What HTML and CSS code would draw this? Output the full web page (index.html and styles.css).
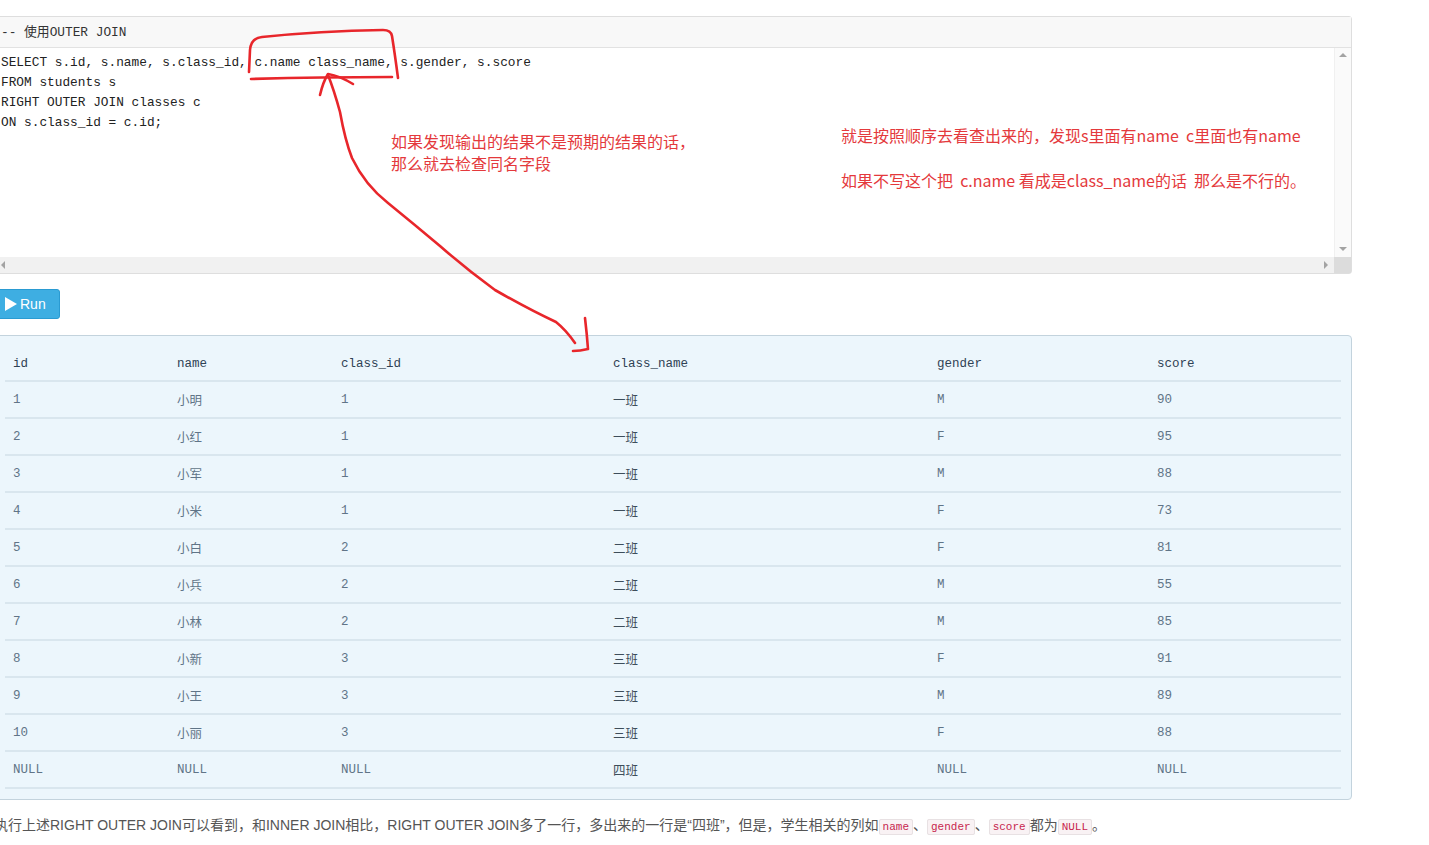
FILE: index.html
```html
<!DOCTYPE html>
<html lang="zh">
<head>
<meta charset="utf-8">
<title>RIGHT OUTER JOIN</title>
<link rel="stylesheet" href="styles.css">
</head>
<body>
<div class="wrap">
  <div class="editor">
    <div class="editor-head">-- 使用OUTER JOIN</div>
    <div class="editor-body">
      <div class="code-area">
<pre class="code">SELECT s.id, s.name, s.class_id, c.name class_name, s.gender, s.score
FROM students s
RIGHT OUTER JOIN classes c
ON s.class_id = c.id;</pre>
        <div class="note note-left">如果发现输出的结果不是预期的结果的话，<br>那么就去检查同名字段</div>
        <div class="note note-right">
          <p>就是按照顺序去看查出来的，发现s里面有name&nbsp; c里面也有name</p>
          <p>如果不写这个把&nbsp; c.name 看成是class_name的话&nbsp; 那么是不行的。</p>
        </div>
      </div>
      <div class="vscroll">
        <span class="arr arr-up"></span>
        <span class="arr arr-down"></span>
      </div>
    </div>
    <div class="hscroll-row">
      <div class="hscroll">
        <span class="arr arr-left"></span>
        <span class="arr arr-right"></span>
      </div>
      <div class="corner"></div>
    </div>
  </div>

  <button class="run-btn"><svg class="tri" width="12" height="14" viewBox="0 0 12 14" aria-hidden="true"><polygon points="0,0 12,7 0,14" fill="#ffffff"/></svg>Run</button>

  <div class="result">
    <table class="grid">
      <thead>
        <tr><th class="c1">id</th><th class="c2">name</th><th class="c3">class_id</th><th class="c4">class_name</th><th class="c5">gender</th><th class="c6">score</th></tr>
      </thead>
      <tbody>
        <tr><td>1</td><td>小明</td><td>1</td><td class="cn">一班</td><td>M</td><td>90</td></tr>
        <tr><td>2</td><td>小红</td><td>1</td><td class="cn">一班</td><td>F</td><td>95</td></tr>
        <tr><td>3</td><td>小军</td><td>1</td><td class="cn">一班</td><td>M</td><td>88</td></tr>
        <tr><td>4</td><td>小米</td><td>1</td><td class="cn">一班</td><td>F</td><td>73</td></tr>
        <tr><td>5</td><td>小白</td><td>2</td><td class="cn">二班</td><td>F</td><td>81</td></tr>
        <tr><td>6</td><td>小兵</td><td>2</td><td class="cn">二班</td><td>M</td><td>55</td></tr>
        <tr><td>7</td><td>小林</td><td>2</td><td class="cn">二班</td><td>M</td><td>85</td></tr>
        <tr><td>8</td><td>小新</td><td>3</td><td class="cn">三班</td><td>F</td><td>91</td></tr>
        <tr><td>9</td><td>小王</td><td>3</td><td class="cn">三班</td><td>M</td><td>89</td></tr>
        <tr><td>10</td><td>小丽</td><td>3</td><td class="cn">三班</td><td>F</td><td>88</td></tr>
        <tr><td>NULL</td><td>NULL</td><td>NULL</td><td class="cn">四班</td><td>NULL</td><td>NULL</td></tr>
      </tbody>
    </table>
  </div>

  <p class="desc">执行上述RIGHT OUTER JOIN可以看到，和INNER JOIN相比，RIGHT OUTER JOIN多了一行，多出来的一行是“四班”，但是，学生相关的列如<code>name</code>、<code>gender</code>、<code>score</code>都为<code>NULL</code>。</p>
</div>

<svg class="marks" width="1429" height="845" viewBox="0 0 1429 845" aria-hidden="true">
  <g fill="none" stroke="#e8262b" stroke-width="2.6" stroke-linecap="round" stroke-linejoin="round">
    <path d="M249 72 L250 50 Q251 38 262 37 Q320 31 383 30 Q391 30 392 36 Q395 55 398 78"/>
    <path d="M251 79 Q320 77 392 77"/>
    <path d="M320 95 Q323 82 328 74 Q340 76 353 84"/>
    <path d="M328 75 Q334 90 340 112 Q345 140 352 158 Q365 185 388 203 Q415 225 440 246 Q465 268 495 290 Q530 310 556 322 Q566 330 575 343"/>
    <path d="M585 318 Q587 335 588 349 Q580 351 573 351"/>
  </g>
</svg>
</body>
</html>
```

FILE: styles.css
```css
html, body {
  margin: 0;
  padding: 0;
  background: #ffffff;
}

body {
  position: relative;
  width: 1429px;
  height: 845px;
  overflow: hidden;
  font-family: "Liberation Sans", "Noto Sans CJK SC", sans-serif;
}

.wrap {
  margin-left: -6px;
  width: 1358px;
  padding-top: 16px;
}

/* ---------- editor ---------- */
.editor {
  border: 1px solid #dedede;
  border-radius: 3px;
  background: #ffffff;
}

.editor-head {
  height: 30px;
  line-height: 31px;
  padding-left: 6px;
  background: #f8f8f8;
  border-bottom: 1px solid #e2e2e2;
  font-family: "Liberation Mono", "Noto Sans CJK SC", monospace;
  font-size: 12.8px;
  color: #333333;
}

.editor-body {
  display: flex;
  height: 209px;
}

.code-area {
  position: relative;
  flex: 1;
}

.code {
  margin: 0;
  padding: 5px 0 0 6px;
  font-family: "Liberation Mono", monospace;
  font-size: 12.8px;
  line-height: 20px;
  color: #222222;
}

.note {
  position: absolute;
  color: #e4393c;
  font-family: "Noto Sans CJK SC", "Liberation Sans", sans-serif;
  font-size: 16px;
  white-space: nowrap;
}

.note-left {
  left: 396px;
  top: 82px;
  line-height: 22px;
}

.note-right {
  left: 846px;
  top: 76px;
  line-height: 22px;
}

.note-right p {
  margin: 0 0 23px 0;
}

.vscroll {
  position: relative;
  width: 16px;
  background: #fafafa;
  border-left: 1px solid #f0f0f0;
}

.hscroll-row {
  display: flex;
  height: 16px;
}

.hscroll {
  position: relative;
  flex: 1;
  background: #f1f1f1;
}

.corner {
  width: 17px;
  background: #dcdcdc;
}

.arr {
  position: absolute;
  width: 0;
  height: 0;
  border: 4px solid transparent;
}

.arr-up {
  left: 4px;
  top: 5px;
  border-bottom-color: #a3a3a3;
  border-top-width: 0;
}

.arr-down {
  left: 4px;
  bottom: 6px;
  border-top-color: #a3a3a3;
  border-bottom-width: 0;
}

.arr-left {
  left: 6px;
  top: 4px;
  border-right-color: #a3a3a3;
  border-left-width: 0;
}

.arr-right {
  right: 6px;
  top: 4px;
  border-left-color: #a3a3a3;
  border-right-width: 0;
}

/* ---------- run button ---------- */
.run-btn {
  display: flex;
  align-items: center;
  margin-top: 15px;
  height: 30px;
  width: 66px;
  padding: 0 0 0 10px;
  background: #3eaee2;
  border: 1px solid #2a9bd2;
  border-radius: 3px;
  color: #ffffff;
  font-family: "Liberation Sans", sans-serif;
  font-size: 14px;
  line-height: 28px;
}

.tri {
  display: block;
  margin-right: 3px;
}

/* ---------- result ---------- */
.result {
  margin-top: 16px;
  background: #ecf6fc;
  border: 1px solid #c3d3dd;
  border-radius: 4px;
  padding: 8px 10px 10px 10px;
}

.grid {
  width: 100%;
  border-collapse: separate;
  border-spacing: 0;
  font-family: "Liberation Mono", "Noto Sans CJK SC", monospace;
  font-size: 12.5px;
}

.grid th,
.grid td {
  padding: 0 0 0 8px;
  text-align: left;
  border-bottom: 2px solid #d9e6ee;
  vertical-align: middle;
}

.grid th {
  height: 33px;
  padding-top: 3px;
  font-weight: normal;
  color: #2f4254;
}

.grid td {
  height: 35px;
  color: #607487;
}

.grid td.cn {
  color: #3d4d5a;
}

.c1 { width: 156px; }
.c2 { width: 156px; }
.c3 { width: 264px; }
.c4 { width: 316px; }
.c5 { width: 212px; }

/* ---------- description ---------- */
.desc {
  margin: 15px 0 0 0;
  font-size: 14px;
  line-height: 20px;
  color: #555555;
  white-space: nowrap;
}

.desc code {
  font-family: "Liberation Mono", monospace;
  font-size: 11px;
  color: #c7254e;
  background: #f9f2f4;
  border: 1px solid #e8e1e3;
  border-radius: 2px;
  padding: 1px 3px;
}

/* ---------- hand drawn marks ---------- */
.marks {
  position: absolute;
  left: 0;
  top: 0;
  pointer-events: none;
}
```
